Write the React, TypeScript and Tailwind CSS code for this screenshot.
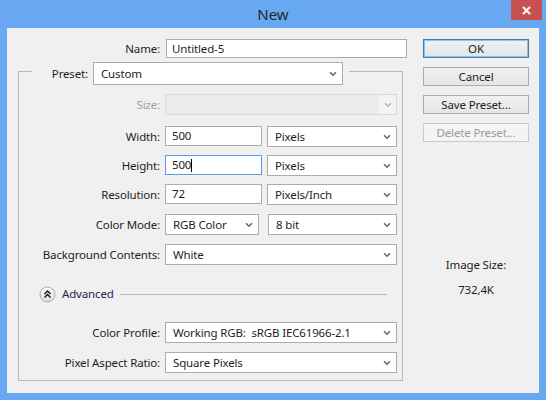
import React from 'react';

const font = { fontFamily: '"Segoe UI", "Noto Sans", "Open Sans", sans-serif' };

function Chevron({ disabled = false }: { disabled?: boolean }) {
  return (
    <svg width="8" height="6" viewBox="0 0 8 6" className="shrink-0">
      <path
        d="M1 1.2 L4 4.2 L7 1.2"
        fill="none"
        stroke={disabled ? '#b8b8b8' : '#6a6a6a'}
        strokeWidth="1.6"
      />
    </svg>
  );
}

function Select({ value, width, height = 'h-[21px]' }: { value: string; width: string; height?: string }) {
  return (
    <div className={`${width} ${height} flex items-center justify-between border border-[#acacac] bg-white pl-[7px] pr-[5px] text-[#1e1e1e]`}>
      <span className="whitespace-pre">{value}</span>
      <Chevron />
    </div>
  );
}

function Input({ value, width, focused = false }: { value: string; width: string; focused?: boolean }) {
  return (
    <div className={`${width} h-[20px] flex items-center border bg-white pl-[6px] text-[#1e1e1e] ${focused ? 'border-[#569de5]' : 'border-[#acacac]'}`}>
      <span>{value}</span>
      {focused && <span className="w-px h-[13px] bg-black" />}
    </div>
  );
}

function Row({ label, className = '', children, muted = false }: { label: string; className?: string; children: React.ReactNode; muted?: boolean }) {
  return (
    <div className={`flex items-start h-[21px] ${className}`}>
      <span className={`w-[141px] text-right leading-[21px] ${muted ? 'text-[#a0a0a0]' : 'text-[#1e1e1e]'}`}>{label}</span>
      <div className="ml-[5px] flex gap-[5px]">{children}</div>
    </div>
  );
}

function Button({ label, primary = false, disabled = false }: { label: string; primary?: boolean; disabled?: boolean }) {
  const tone = disabled
    ? 'border-[#cacaca] bg-[#f4f4f4] text-[#9a9a9a]'
    : primary
      ? 'border-[#3c7fb1] bg-gradient-to-b from-[#f0f0f0] to-[#e5e5e5] text-[#1e1e1e] shadow-[inset_0_0_0_1px_#8ec2ee]'
      : 'border-[#acacac] bg-gradient-to-b from-[#f0f0f0] to-[#e5e5e5] text-[#1e1e1e]';
  return (
    <div className={`h-[19px] w-[106px] flex items-center justify-center border ${tone}`}>
      {label}
    </div>
  );
}

export default function App() {
  return (
    <div className="w-[546px] h-[400px] bg-[#68a8f3] flex flex-col overflow-hidden text-[11.5px] tracking-[-0.15px]" style={font}>
      <div className="h-[28px] relative flex items-start justify-center">
        <span className="mt-[3px] text-[15px] tracking-normal text-[#262626]">New</span>
        <div className="absolute right-[4px] top-0 w-[31px] h-[20px] bg-[#c75050] flex items-center justify-center">
          <svg width="9" height="9" viewBox="0 0 9 9">
            <path d="M1 1 L8 8 M8 1 L1 8" stroke="white" strokeWidth="2" />
          </svg>
        </div>
      </div>

      <div className="mx-[7px] h-[365px] bg-[#f0f0f0] flex">
        {/* left side */}
        <div className="w-[400px] pt-[11px] pl-[11px]">
          <div className="flex items-center">
            <span className="w-[142px] text-right text-[#1e1e1e]">Name:</span>
            <div className="ml-[6px] w-[241px] h-[19px] flex items-center border border-[#acacac] bg-white pl-[5px] text-[#1e1e1e]">
              Untitled-5
            </div>
          </div>

          <div className="mt-[13px] w-[385px] h-[310px] border border-[#b9b9b9] flex flex-col">
            <div className="-mt-[10px] ml-[13px] w-[317px] flex items-center justify-end gap-[5px] pr-[6px] bg-[#f0f0f0]">
              <span className="text-[#1e1e1e]">Preset:</span>
              <Select value="Custom" width="w-[250px]" height="h-[23px]" />
            </div>

            <Row label="Size:" className="mt-[9px]" muted>
              <div className="w-[232px] h-[21px] flex border border-[#d9d9d9] bg-[#ececec]">
                <div className="flex-1" />
                <div className="w-[17px] bg-[#f3f3f3] flex items-center justify-center">
                  <Chevron disabled />
                </div>
              </div>
            </Row>
            <Row label="Width:" className="mt-[11px]">
              <Input value="500" width="w-[97px]" />
              <Select value="Pixels" width="w-[130px]" />
            </Row>
            <Row label="Height:" className="mt-[8px]">
              <Input value="500" width="w-[97px]" focused />
              <Select value="Pixels" width="w-[130px]" />
            </Row>
            <Row label="Resolution:" className="mt-[8px]">
              <Input value="72" width="w-[97px]" />
              <Select value="Pixels/Inch" width="w-[130px]" />
            </Row>
            <Row label="Color Mode:" className="mt-[9px]">
              <Select value="RGB Color" width="w-[94px]" />
              <div className="ml-[4px]">
                <Select value="8 bit" width="w-[129px]" />
              </div>
            </Row>
            <Row label="Background Contents:" className="mt-[9px]">
              <Select value="White" width="w-[232px]" />
            </Row>

            <div className="mt-[21px] h-[16px] flex items-center">
              <svg width="17" height="17" viewBox="0 0 17 17" className="ml-[20px] shrink-0">
                <defs>
                  <linearGradient id="adv" x1="0" y1="0" x2="0" y2="1">
                    <stop offset="0" stopColor="#ffffff" />
                    <stop offset="1" stopColor="#dcdcdc" />
                  </linearGradient>
                </defs>
                <circle cx="8.5" cy="8.5" r="7.5" fill="url(#adv)" stroke="#a9a9a9" />
                <path d="M5.5 8 L8.5 5 L11.5 8 M5.5 11.5 L8.5 8.5 L11.5 11.5" fill="none" stroke="#111" strokeWidth="1.4" />
              </svg>
              <span className="ml-[6px] text-[#1b2848]">Advanced</span>
              <div className="ml-[6px] mr-[15px] flex-1 h-px bg-[#b9b9b9]" />
            </div>

            <Row label="Color Profile:" className="mt-[20px]">
              <Select value="Working RGB:  sRGB IEC61966-2.1" width="w-[232px]" />
            </Row>
            <Row label="Pixel Aspect Ratio:" className="mt-[9px]">
              <Select value="Square Pixels" width="w-[232px]" />
            </Row>
          </div>
        </div>

        {/* right side */}
        <div className="ml-[16px] pt-[11px] w-[106px] flex flex-col">
          <div className="flex flex-col gap-[9px]">
            <Button label="OK" primary />
            <Button label="Cancel" />
            <Button label="Save Preset..." />
            <Button label="Delete Preset..." disabled />
          </div>
          <div className="mt-[115px] text-center leading-[16px] text-[#1e1e1e]">Image Size:</div>
          <div className="mt-[9px] text-center leading-[16px] text-[#1e1e1e]">732,4K</div>
        </div>
      </div>
    </div>
  );
}
